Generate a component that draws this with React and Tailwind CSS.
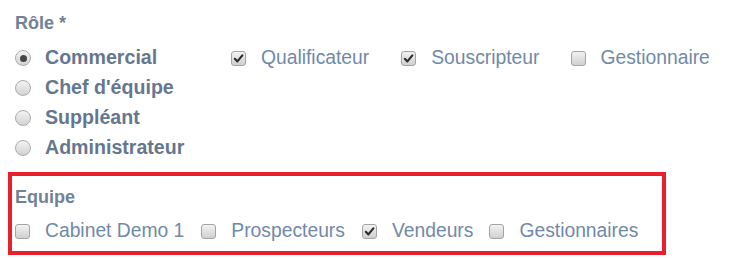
const font = { fontFamily: '"Liberation Sans", Arial, sans-serif' };

function Radio({ checked }) {
  return (
    <span className="flex h-[16px] w-[16px] shrink-0 items-center justify-center rounded-full border border-[#acacac] bg-gradient-to-b from-[#f3f3f3] to-[#d2d2d2]">
      {checked && <span className="h-[7px] w-[7px] rounded-full bg-[#454545]" />}
    </span>
  );
}

function Checkbox({ checked }) {
  return (
    <span className="flex h-[15px] w-[15px] shrink-0 items-center justify-center rounded-[3px] border border-[#a4a4a4] bg-gradient-to-b from-[#f2f2f2] to-[#d0d0d0]">
      {checked && (
        <svg viewBox="0 0 12 12" className="h-[11px] w-[11px]">
          <path d="M2 6.3 L4.8 9.2 L10.2 2.6" fill="none" stroke="#2b2b2b" strokeWidth="2.3" strokeLinecap="round" strokeLinejoin="round" />
        </svg>
      )}
    </span>
  );
}

function RadioRow({ label, checked }) {
  return (
    <div className="flex h-[30px] items-center">
      <Radio checked={checked} />
      <span className="ml-[14px] text-[19.6px] font-bold text-[#65778e]">{label}</span>
    </div>
  );
}

function Check({ label, checked, gap }) {
  return (
    <div className={`flex items-center ${gap}`}>
      <Checkbox checked={checked} />
      <span className="ml-[15px] text-[19.3px] text-[#7189a8]">{label}</span>
    </div>
  );
}

export default function App() {
  return (
    <div className="h-[258px] w-[753px] bg-white" style={font}>
      <div className="pl-[15px] pt-[11px]">
        <div className="h-[24px] text-[18px] font-bold leading-[24px] text-[#6f8298]">Rôle *</div>
        <div className="mt-[8px] flex">
          <div className="flex w-[216px] flex-col">
            <RadioRow label="Commercial" checked />
            <RadioRow label="Chef d'équipe" />
            <RadioRow label="Suppléant" />
            <RadioRow label="Administrateur" />
          </div>
          <div className="flex h-[30px] items-center">
            <Check label="Qualificateur" checked gap="mr-[32px]" />
            <Check label="Souscripteur" checked gap="mr-[31px]" />
            <Check label="Gestionnaire" gap="" />
          </div>
        </div>
      </div>
      <div className="ml-[8px] mt-[9px] h-[83px] w-[658px] border-4 border-[#e8202a] pl-[3px] pt-[10px]">
        <div className="h-[22px] text-[18px] font-bold leading-[22px] text-[#6f8298]">Equipe</div>
        <div className="mt-[8px] flex h-[30px] items-center">
          <Check label="Cabinet Demo 1" gap="mr-[17px]" />
          <Check label="Prospecteurs" gap="mr-[17px]" />
          <Check label="Vendeurs" checked gap="mr-[16px]" />
          <Check label="Gestionnaires" gap="" />
        </div>
      </div>
    </div>
  );
}
